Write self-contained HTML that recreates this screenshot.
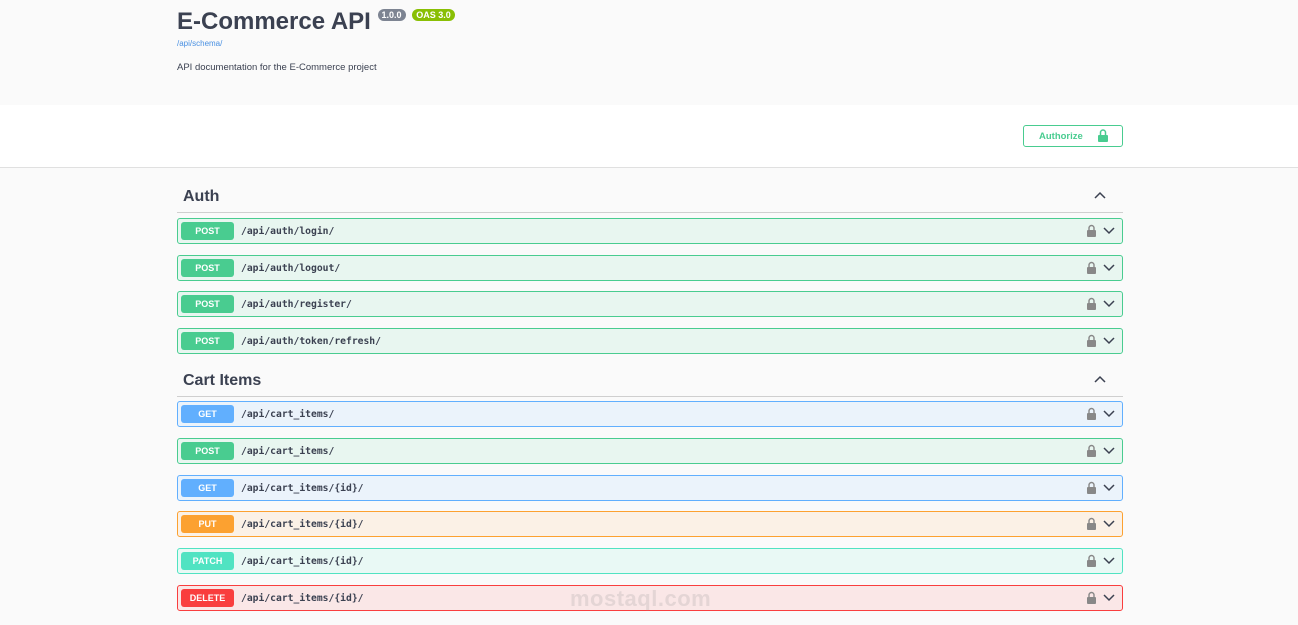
<!DOCTYPE html>
<html><head><meta charset="utf-8"><style>
*{box-sizing:border-box;margin:0;padding:0}
body{width:1298px;height:625px;overflow:hidden;background:#fafafa;font-family:"Liberation Sans",sans-serif;color:#3b4151;position:relative}
.hdr{height:105px;background:#fafafa;position:relative}
.title{position:absolute;left:177px;top:8px;font-size:24px;font-weight:bold;color:#3b4151}
.b{display:inline-block;font-size:9px;color:#fff;border-radius:8px;padding:1px 4px;vertical-align:top;position:relative;top:1px;font-weight:bold}
.url{position:absolute;left:177px;top:39px;font-size:8px;color:#4990e2}
.desc{position:absolute;left:177px;top:62px;font-size:9.5px}
.band{position:absolute;top:105px;left:0;width:1298px;height:63px;background:#fff;border-bottom:1px solid #e0e0e0}
.auth{position:absolute;left:1023px;top:20px;width:100px;height:22px;border:1.5px solid #49cc90;border-radius:3px;color:#49cc90;font-size:9.5px;font-weight:bold;padding:5px 0 0 15px}
.sec{position:absolute;left:177px;width:946px;height:20px;border-bottom:1px solid #cfcfcf}
.sec span{position:absolute;left:6px;top:-5px;font-size:16px;font-weight:bold}
.sec svg{position:absolute;right:17px;top:-2px}
.op{position:absolute;left:177px;width:946px;height:26px;border:1px solid;border-radius:3px}
.m{position:absolute;left:3px;top:3px;width:53px;height:18px;border-radius:3px;color:#fff;font-size:9px;font-weight:bold;text-align:center;line-height:18px}
.p{position:absolute;left:63px;top:6.5px;font-family:"DejaVu Sans Mono",monospace;font-weight:bold;font-size:9.7px;color:#3b4151}
.ic{position:absolute;right:6px;top:5px}
.post{background:#e8f6f0;border-color:#49cc90}.post .m{background:#49cc90}
.get{background:#ebf3fb;border-color:#61affe}.get .m{background:#61affe}
.put{background:#fbf1e6;border-color:#fca130}.put .m{background:#fca130}
.patch{background:#e9f9f5;border-color:#50e3c2}.patch .m{background:#50e3c2}
.del{background:#fae7e7;border-color:#f93e3e}.del .m{background:#f93e3e}
.wm{position:absolute;left:570px;top:586px;font-size:22px;font-weight:bold;color:rgba(150,150,150,.22);letter-spacing:.5px}
</style></head><body>
<div class="hdr">
<div class="title">E-Commerce API <span class="b" style="background:#7d8492">1.0.0</span> <span class="b" style="background:#89bf04">OAS 3.0</span></div>
<div class="url">/api/schema/</div>
<div class="desc">API documentation for the E-Commerce project</div>
</div>
<div class="band"><div class="auth">Authorize <svg style="position:absolute;right:14px;top:3px" width="10" height="13" viewBox="0 0 10 13"><path d="M2.5 6V3.5a2.5 2.5 0 0 1 5 0V6" stroke="#49cc90" stroke-width="1.5" fill="none"/><rect x="0" y="6" width="10" height="7" rx="1" fill="#49cc90"/></svg></div></div>

<div class="sec" style="top:193px"><span>Auth</span><svg width="12" height="8" viewBox="0 0 12 8"><path d="M1 7L6 2l5 5" stroke="#3b4151" stroke-width="1.5" fill="none"/></svg></div>
<div class="sec" style="top:377px"><span>Cart Items</span><svg width="12" height="8" viewBox="0 0 12 8"><path d="M1 7L6 2l5 5" stroke="#3b4151" stroke-width="1.5" fill="none"/></svg></div>

<div class="op post" style="top:218px"><div class="m">POST</div><div class="p">/api/auth/login/</div><svg class="ic" width="30" height="14"><path d="M3 6V4a2.5 2.5 0 0 1 5 0V6" stroke="#888" stroke-width="1.4" fill="none"/><rect x="1" y="6" width="9" height="7" rx="1" fill="#888"/><path d="M18 4l5 5 5-5" stroke="#3b4151" stroke-width="1.5" fill="none"/></svg></div>
<div class="op post" style="top:255px"><div class="m">POST</div><div class="p">/api/auth/logout/</div><svg class="ic" width="30" height="14"><path d="M3 6V4a2.5 2.5 0 0 1 5 0V6" stroke="#888" stroke-width="1.4" fill="none"/><rect x="1" y="6" width="9" height="7" rx="1" fill="#888"/><path d="M18 4l5 5 5-5" stroke="#3b4151" stroke-width="1.5" fill="none"/></svg></div>
<div class="op post" style="top:291px"><div class="m">POST</div><div class="p">/api/auth/register/</div><svg class="ic" width="30" height="14"><path d="M3 6V4a2.5 2.5 0 0 1 5 0V6" stroke="#888" stroke-width="1.4" fill="none"/><rect x="1" y="6" width="9" height="7" rx="1" fill="#888"/><path d="M18 4l5 5 5-5" stroke="#3b4151" stroke-width="1.5" fill="none"/></svg></div>
<div class="op post" style="top:328px"><div class="m">POST</div><div class="p">/api/auth/token/refresh/</div><svg class="ic" width="30" height="14"><path d="M3 6V4a2.5 2.5 0 0 1 5 0V6" stroke="#888" stroke-width="1.4" fill="none"/><rect x="1" y="6" width="9" height="7" rx="1" fill="#888"/><path d="M18 4l5 5 5-5" stroke="#3b4151" stroke-width="1.5" fill="none"/></svg></div>

<div class="op get" style="top:401px"><div class="m">GET</div><div class="p">/api/cart_items/</div><svg class="ic" width="30" height="14"><path d="M3 6V4a2.5 2.5 0 0 1 5 0V6" stroke="#888" stroke-width="1.4" fill="none"/><rect x="1" y="6" width="9" height="7" rx="1" fill="#888"/><path d="M18 4l5 5 5-5" stroke="#3b4151" stroke-width="1.5" fill="none"/></svg></div>
<div class="op post" style="top:438px"><div class="m">POST</div><div class="p">/api/cart_items/</div><svg class="ic" width="30" height="14"><path d="M3 6V4a2.5 2.5 0 0 1 5 0V6" stroke="#888" stroke-width="1.4" fill="none"/><rect x="1" y="6" width="9" height="7" rx="1" fill="#888"/><path d="M18 4l5 5 5-5" stroke="#3b4151" stroke-width="1.5" fill="none"/></svg></div>
<div class="op get" style="top:475px"><div class="m">GET</div><div class="p">/api/cart_items/{id}/</div><svg class="ic" width="30" height="14"><path d="M3 6V4a2.5 2.5 0 0 1 5 0V6" stroke="#888" stroke-width="1.4" fill="none"/><rect x="1" y="6" width="9" height="7" rx="1" fill="#888"/><path d="M18 4l5 5 5-5" stroke="#3b4151" stroke-width="1.5" fill="none"/></svg></div>
<div class="op put" style="top:511px"><div class="m">PUT</div><div class="p">/api/cart_items/{id}/</div><svg class="ic" width="30" height="14"><path d="M3 6V4a2.5 2.5 0 0 1 5 0V6" stroke="#888" stroke-width="1.4" fill="none"/><rect x="1" y="6" width="9" height="7" rx="1" fill="#888"/><path d="M18 4l5 5 5-5" stroke="#3b4151" stroke-width="1.5" fill="none"/></svg></div>
<div class="op patch" style="top:548px"><div class="m">PATCH</div><div class="p">/api/cart_items/{id}/</div><svg class="ic" width="30" height="14"><path d="M3 6V4a2.5 2.5 0 0 1 5 0V6" stroke="#888" stroke-width="1.4" fill="none"/><rect x="1" y="6" width="9" height="7" rx="1" fill="#888"/><path d="M18 4l5 5 5-5" stroke="#3b4151" stroke-width="1.5" fill="none"/></svg></div>
<div class="op del" style="top:585px"><div class="m">DELETE</div><div class="p">/api/cart_items/{id}/</div><svg class="ic" width="30" height="14"><path d="M3 6V4a2.5 2.5 0 0 1 5 0V6" stroke="#888" stroke-width="1.4" fill="none"/><rect x="1" y="6" width="9" height="7" rx="1" fill="#888"/><path d="M18 4l5 5 5-5" stroke="#3b4151" stroke-width="1.5" fill="none"/></svg></div>
<div class="wm">mostaql.com</div>
</body></html>
